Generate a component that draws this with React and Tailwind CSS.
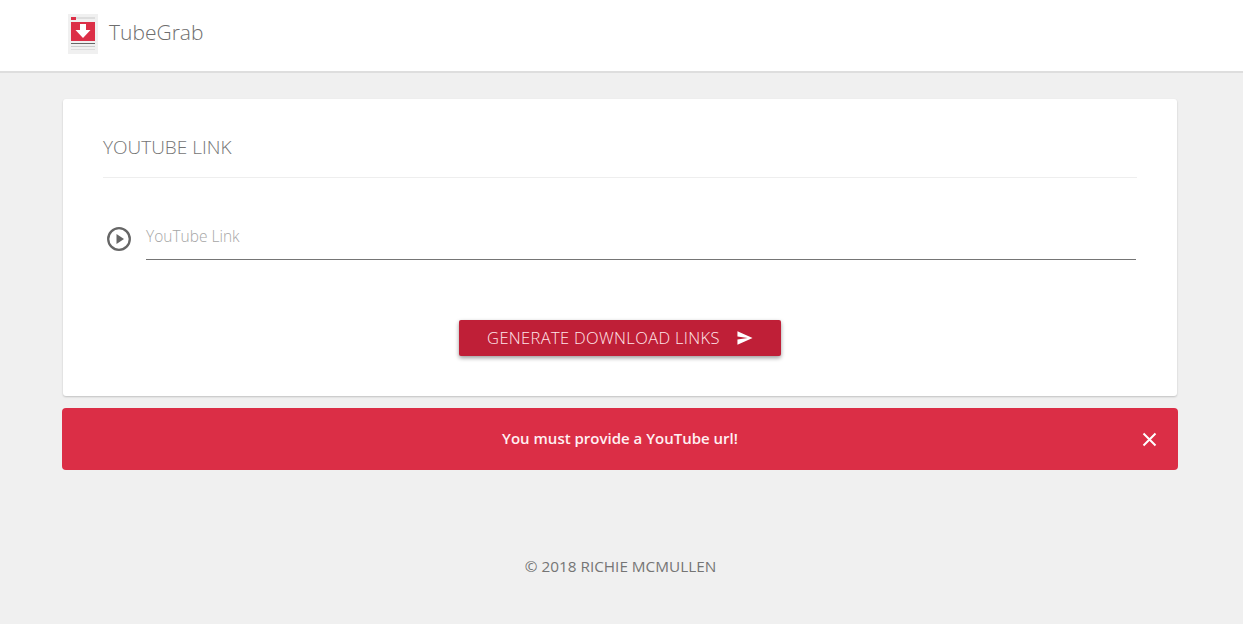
import React from 'react';

function Logo() {
  return (
    <svg width="30" height="40" viewBox="0 0 30 40">
      <rect width="30" height="40" fill="#f0f0f0" />
      <rect x="8" y="3" width="19" height="2" fill="#ddd" />
      <rect x="3" y="3" width="5" height="3" fill="#dc2f47" />
      <rect x="3" y="8" width="24" height="19" fill="#dc2f47" />
      <path d="M12 10h6v6h4.5l-7.5 8-7.5-8H12z" fill="#fff" />
      <rect x="3" y="29" width="24" height="1" fill="#666" />
      <rect x="3" y="32" width="24" height="1" fill="#ccc" />
      <rect x="3" y="35" width="24" height="1" fill="#ddd" />
    </svg>
  );
}

export default function App() {
  return (
    <div className="min-h-screen bg-[#f0f0f0] font-['Open_Sans',sans-serif]">
      <header className="h-[73px] bg-white border-b-2 border-[#dedede] pl-[68px] pb-[3px] flex items-center">
        <Logo />
        <span className="ml-[11px] mb-[2px] text-[21px] text-[#6e6e6e] font-light">TubeGrab</span>
      </header>

      <main className="pl-[62px] pr-[65px] pt-[26px]">
        <section className="mx-px h-[297px] bg-white rounded-[3px] shadow-[0_1px_2px_rgba(0,0,0,0.2)] px-10 pt-[36px]">
          <h2 className="h-[43px] border-b border-[#eeeeee] text-[19px] leading-[24px] text-[#757575] font-light">YOUTUBE LINK</h2>
          <div className="mt-[40px] flex items-start">
            <svg className="ml-[3px] mt-[8px]" width="26" height="26" viewBox="0 0 26 26">
              <circle cx="13" cy="13" r="10.8" fill="none" stroke="#666" strokeWidth="2.3" />
              <path d="M10.5 8l7.5 5-7.5 5z" fill="#666" />
            </svg>
            <div className="ml-[14px] mr-px flex-1 h-[42px] border-b border-[#757575] text-[15.5px] leading-[37px] text-[#a6a6a6] font-light">YouTube Link</div>
          </div>
          <div className="mt-[60px] flex justify-center">
            <button className="w-[322px] h-[36px] bg-[#bf1f37] rounded-[2px] shadow-[0_2px_4px_rgba(0,0,0,0.4)] flex items-center justify-center gap-[17px] text-[16.5px] tracking-[0.35px] text-[#ffe6ea] font-light">
              GENERATE DOWNLOAD LINKS
              <svg width="16" height="14" viewBox="0 0 18 15">
                <path d="M0.5 0L17.5 7.5 0.5 15V9.2L12 7.5 0.5 5.8z" fill="#fff" />
              </svg>
            </button>
          </div>
        </section>

        <div className="mt-[12px] h-[62px] bg-[#db2e46] rounded-[4px] relative flex items-center justify-center pb-px text-[15px] font-semibold text-[#fff0f2]">
          You must provide a YouTube url!
          <svg className="absolute right-[21px] top-[24px]" width="15" height="15" viewBox="0 0 15 15">
            <path d="M1.5 1.5l12 12M13.5 1.5l-12 12" stroke="#fff" strokeWidth="2" />
          </svg>
        </div>
      </main>

      <footer className="mt-[84px] pr-[2px] text-center text-[15.3px] leading-6 text-[#757575]">© 2018 RICHIE MCMULLEN</footer>
    </div>
  );
}
